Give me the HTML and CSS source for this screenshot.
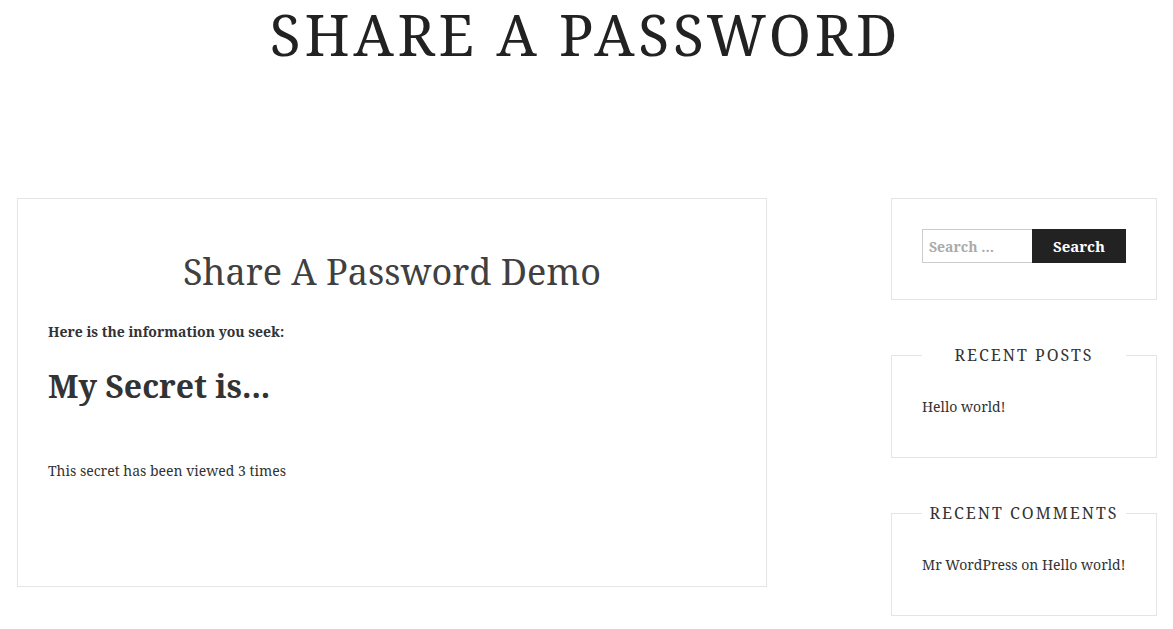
FILE: index.html
```html
<!DOCTYPE html>
<html lang="en">
<head>
<meta charset="utf-8">
<title>Share A Password</title>
<link rel="stylesheet" href="styles.css">
</head>
<body>
<header class="site-header">
  <h1 class="site-title">SHARE A PASSWORD</h1>
</header>
<div class="layout">
  <main class="content">
    <article class="entry">
      <h2 class="entry-title">Share A Password Demo</h2>
      <p class="lead"><strong>Here is the information you seek:</strong></p>
      <h3 class="secret">My Secret is...</h3>
      <p class="views">This secret has been viewed 3 times</p>
    </article>
  </main>
  <aside class="sidebar">
    <section class="widget widget-search">
      <form class="search-form">
        <input class="search-field" type="search" placeholder="Search …">
        <button class="search-submit" type="button">Search</button>
      </form>
    </section>
    <section class="widget widget-titled">
      <h4 class="widget-title">RECENT POSTS</h4>
      <ul class="widget-list"><li>Hello world!</li></ul>
    </section>
    <section class="widget widget-titled">
      <h4 class="widget-title">RECENT COMMENTS</h4>
      <ul class="widget-list"><li>Mr WordPress on Hello world!</li></ul>
    </section>
  </aside>
</div>
</body>
</html>
```
FILE: styles.css
```css
* { box-sizing: border-box; }
html, body { margin: 0; padding: 0; background: #fff; }
body {
  font-family: "Noto Serif", "DejaVu Serif", "Liberation Serif", serif;
  color: #404040;
  font-size: 14px;
  line-height: 1.5;
}
.site-header {
  text-align: center;
  padding-top: 0;
  height: 198px;
}
.site-title {
  margin: 0;
  font-weight: 400;
  font-size: 57px;
  line-height: 68px;
  letter-spacing: 3.75px;
  padding-right: 2px;
  color: #222;
}
.layout {
  display: flex;
  justify-content: space-between;
  align-items: flex-start;
  padding: 0 16px 0 17px;
}
.content { width: 750px; }
.entry {
  border: 1px solid #e5e5e5;
  padding: 48px 30px 0;
  height: 389px;
}
.entry-title {
  margin: 0 0 24px;
  text-align: center;
  font-weight: 400;
  font-size: 36px;
  line-height: 50px;
  color: #404040;
}
.lead { margin: 0 0 22px; font-size: 14px; color: #333; }
.secret {
  margin: 0 0 52px;
  font-size: 32px;
  line-height: 44px;
  font-weight: 700;
  color: #333;
}
.views { margin: 0; font-size: 14px; color: #333; }
.sidebar {
  width: 266px;
  display: flex;
  flex-direction: column;
  gap: 55px;
}
.widget {
  border: 1px solid #e5e5e5;
  position: relative;
}
.widget-search { padding: 30px 30px 0; height: 102px; }
.search-form { display: flex; }
.search-field {
  width: 110px;
  height: 34px;
  border: 1px solid #ccc;
  border-right: none;
  padding: 0 6px;
  font-family: inherit;
  font-size: 14px;
  font-weight: 700;
  color: #333;
  outline: none;
}
.search-field::placeholder { color: #aaa; }
.search-submit {
  width: 94px;
  height: 34px;
  border: none;
  background: #222;
  color: #fff;
  font-family: inherit;
  font-size: 15px;
  font-weight: 700;
  padding: 0;
}
.widget-titled { padding: 30px 30px 0; height: 103px; }
.widget-title {
  position: absolute;
  top: -12px;
  left: 30px;
  right: 30px;
  margin: 0;
  background: #fff;
  text-align: center;
  font-weight: 400;
  font-size: 16px;
  line-height: 22px;
  letter-spacing: 2px;
  color: #333;
}
.widget-list {
  list-style: none;
  margin: 0;
  padding: 10px 0 0;
  font-size: 14px;
  color: #333;
}
```
